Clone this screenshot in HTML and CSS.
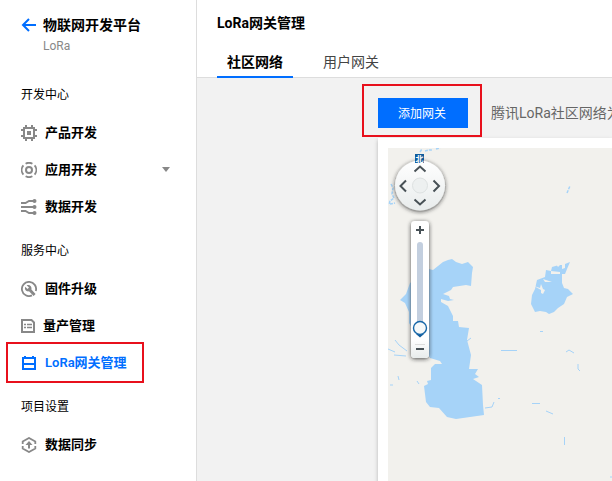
FILE: index.html
```html
<!DOCTYPE html>
<html lang="zh-CN">
<head>
<meta charset="utf-8">
<title>LoRa网关管理</title>
<link rel="stylesheet" href="styles.css">
</head>
<body>
<div class="app">
  <aside class="sidebar">
    <header class="product">
      <svg class="back" width="16" height="16" viewBox="0 0 16 16"><path d="M15 8H2.500M8 2 2 8l6 6" fill="none" stroke="#006eff" stroke-width="2"/></svg>
      <div>
        <h1 class="product-name">物联网开发平台</h1>
        <p class="product-sub">LoRa</p>
      </div>
    </header>
    <nav>
      <section class="group">
        <h2 class="group-title">开发中心</h2>
        <a class="item"><svg class="icon" viewBox="0 0 16 16"><path d="M3 3h10v10H3zM5 0v3M11 0v3M5 13v3M11 13v3M0 5h3M0 11h3M13 5h3M13 11h3"/><path class="solid" d="M6 6h4v4H6z"/></svg><span>产品开发</span></a>
        <a class="item"><svg class="icon" viewBox="0 0 16 16"><circle cx="8" cy="8" r="3"/><path d="M4.600 1.700A7.100 7.100 0 0 1 11.400 1.700M13.600 3.400A7.100 7.100 0 0 1 13.600 12.600M11.400 14.300A7.100 7.100 0 0 1 4.600 14.300M2.400 12.600A7.100 7.100 0 0 1 2.400 3.400" stroke-width="1.800"/></svg><span>应用开发</span><i class="caret"></i></a>
        <a class="item"><svg class="icon" viewBox="0 0 16 16"><path d="M0 4h4.500l3.500-2H13M0 8h13M0 12h4.500l3.500 2H13"/><circle class="solid" cx="13.500" cy="2" r="2"/><circle class="solid" cx="13.500" cy="8" r="2"/><circle class="solid" cx="13.500" cy="14" r="2"/></svg><span>数据开发</span></a>
      </section>
      <section class="group">
        <h2 class="group-title">服务中心</h2>
        <a class="item"><svg class="icon" viewBox="0 0 16 16"><path d="M11 14.400A7.100 7.100 0 1 1 14.800 10" stroke-width="1.800"/><path class="solid" d="M5.600 4.200 8 6.400 6.500 8 4.200 5.700C3.200 8.400 5.200 10.900 8 10.300L12.600 15l2-2L10.400 8.500C11.200 5.500 8.500 3.200 5.600 4.200z"/></svg><span>固件升级</span></a>
        <a class="item item-tight"><svg class="icon" viewBox="0 0 16 16"><path d="M1 2h9.500l2.500 2.500V14H1z"/><path d="M3 6.500h2M6 6.500h5M3 9.500h2M6 9.500h5" stroke-width="1.500"/></svg><span>量产管理</span></a>
        <a class="item item-active"><svg class="icon" viewBox="0 0 16 16"><path d="M2 15V3h12v12M1 14h14M1 9h14M4 1v3M12 1v3"/></svg><span>LoRa网关管理</span></a>
      </section>
      <section class="group">
        <h2 class="group-title">项目设置</h2>
        <a class="item"><svg class="icon" viewBox="0 0 16 16"><path d="M1.700 7V4.500L8 1l6.300 3.500V7M14.300 9v2.500L8 15l-6.300-3.500V9" stroke-width="1.800"/><path d="M8 11.500V6"/><path class="solid" d="M8 4 11.500 8h-7z"/></svg><span>数据同步</span></a>
      </section>
    </nav>
  </aside>
  <main class="main">
    <header class="topbar">
      <h2 class="page-title">LoRa网关管理</h2>
      <div class="tabs"><a class="tab tab-active">社区网络</a><a class="tab">用户网关</a></div>
    </header>
    <div class="content">
      <div class="toolbar"><button class="add">添加网关</button><span class="hint">腾讯LoRa社区网络为</span></div>
      <div class="card">
        <div class="map">
          <svg class="terrain" width="224" height="333" viewBox="388 148 224 333">
            <g class="water">
              <path d="M400 300L406 294 410 283 429 269 433 270 443 262 448 260 452 259 456 262 462 264 468 262 473 267 472 273 471 286 466 285 453 287 451 290 443 294 449 296 450 299 454 300 448 301 441 299 441 302 448 306 453 316 453 321 458 321 459 327 469 328 467 340 471 355 469 369 478 369 475 374 479 377 473 379 482 385 483 405 484 415 456 419 447 417 439 408 430 407 426 402 424 386 428 384 427 381 431 380 431 368 435 364 442 364 440 361 430 358 409 323 409 312 405 303z"/>
              <path d="M531 304l1-9 3-6 2-9 8-3 1-7 5 1v3l9 0 0-2-9-1 1-4 7-2 3 0v4l3-1v-4l5-2-3 7-2 5-3 0 0 9 2 5 4 1 5 5-6 3-3 7-6 4-4 4-5 2-3-2-6-1-5 1z"/>
            </g>
            <path class="land" d="M543 279l9 3-7 0zM534 286l6 2 1-4 2 5 2 1-2 4-2-1 0-3zM556 264l4 1-2 2z"/>
            <path class="river" d="M420 152l2-3M425 151l4-1h3M436 149l4-1M391 184l2 4-1 6 2 4-4 3-1 4M390 204l5-1M567 193l3-7" stroke-dasharray="3 1"/>
            <path class="river thin" d="M395 340l4 5 8 6M388 349l7 3M394 355l12 1M390 385l3 0M398 376l1 4M417 381l2 3M501 350.500h16M578 364v5l2 2M566 352l3-2 5 3M532 403.500h8M546 411l7 3M564.500 437v8M485 408l7-1 2-5M498 398.500h2M540 331.500h3M610 477h2M467 341l4-3"/>
          </svg>
          <svg class="controls" width="66" height="222" viewBox="388 148 66 222">
            <defs>
              <linearGradient id="face" x1="0" y1="0" x2="0" y2="1"><stop offset="0" stop-color="#fff"/><stop offset="1" stop-color="#e8ecec"/></linearGradient>
              <filter id="shade" x="-40%" y="-30%" width="180%" height="160%"><feDropShadow dx="0" dy="1" stdDeviation="2.300" flood-color="#222" flood-opacity=".8"/></filter>
            </defs>
            <circle cx="420" cy="185.500" r="25" fill="url(#face)" filter="url(#shade)"/>
            <circle cx="420" cy="185.500" r="7.500" fill="#edf0f0" stroke="#dde1e1"/>
            <path d="M414.500 171.500l5.500-5 5.500 5M414.500 199.500l5.500 5 5.500-5M406 180.500l-5.500 5.500 5.500 5.500M433.500 180.500l5.500 5.500-5.500 5.500" fill="none" stroke="#485156" stroke-width="2"/>
            <rect x="415" y="154" width="9" height="9" fill="#105c9c"/>
            <text x="419.500" y="161.500" class="north">北</text>
            <rect x="411" y="221" width="18" height="137" rx="4" fill="#fff" filter="url(#shade)"/>
            <path d="M411 339h18v15a4 4 0 0 1-4 4h-10a4 4 0 0 1-4-4z" fill="url(#face)"/>
            <path d="M416 230h8M420 226v8M416 349h8" stroke="#485156" stroke-width="2"/>
            <path d="M415 344.500h10" stroke="#ddd"/>
            <rect x="417" y="242" width="6" height="90" rx="3" fill="#c3cfdf"/>
            <path d="M416 334h8l-4 3.500z" fill="#105c9c"/>
            <circle cx="420" cy="328" r="6.500" fill="#f6f9f9" stroke="#1767a8" stroke-width="1.400"/>
          </svg>
        </div>
      </div>
    </div>
  </main>
</div>
<div class="mark mark-nav"></div>
<div class="mark mark-add"></div>
</body>
</html>
```
FILE: styles.css
```css
* { box-sizing: border-box; }
body {
  margin: 0;
  overflow: hidden;
  color: #000;
  font-family: Roboto, "Noto Sans CJK SC", sans-serif;
}
h1, h2, p { margin: 0; }
.app { display: flex; width: 612px; height: 481px; overflow: hidden; }
.sidebar { flex: none; width: 197px; background: #fff; border-right: 1px solid #ddd; }
.product { display: flex; gap: 6px; height: 76px; padding: 15px 0 0 21px; }
.back { margin-top: 2px; }
.product-name { font-size: 14px; line-height: 20px; font-weight: 700; }
.product-sub { color: #888; font-size: 12px; line-height: 20px; margin-top: 1px; }
.group { margin-bottom: 7px; }
.group-title { padding-left: 21px; font-size: 12px; line-height: 38px; font-weight: 400; }
.item {
  display: flex;
  align-items: center;
  gap: 8px;
  height: 37px;
  padding: 0 26px 0 21px;
  font-size: 13px;
  font-weight: 700;
}
.item span { padding-bottom: 2px; }
.item-tight { gap: 6px; }
.item-active { color: #006eff; }
.item-active span { font-weight: 600; }
.icon { flex: none; width: 16px; height: 16px; fill: none; stroke: #888; stroke-width: 2; }
.icon .solid { fill: #888; stroke: none; }
.item-active .icon { stroke: #006eff; }
.caret { margin-left: auto; border: 4px solid transparent; border-top: 5px solid #888; border-bottom: 0; }
.main { flex: 1; min-width: 0; background: #f2f2f2; }
.topbar { height: 78px; padding: 13px 0 0 20px; background: #fff; border-bottom: 1px solid #ddd; }
.page-title { font-size: 14px; line-height: 20px; font-weight: 700; }
.tabs { display: flex; gap: 20px; margin-top: 13px; }
.tab { height: 32px; padding: 0 10px; font-size: 14px; line-height: 32px; color: #444; }
.tab-active { color: #000; font-weight: 700; border-bottom: 2px solid #006eff; }
.content { padding: 20px 0 0 181px; }
.toolbar { display: flex; align-items: center; gap: 23px; height: 30px; white-space: nowrap; }
.add {
  flex: none;
  width: 90px;
  height: 30px;
  padding: 0 2px 1px 0;
  border: 0;
  background: #006eff;
  color: #fff;
  font: 12px Roboto, "Noto Sans CJK SC", sans-serif;
}
.hint { padding-bottom: 3px; color: #666; font-size: 14px; }
.card { height: 360px; margin-top: 10px; padding: 10px 0 0 10px; background: #fff; box-shadow: 0 2px 4px rgba(0, 0, 0, .25); }
.map { position: relative; height: 350px; overflow: hidden; background: #f2f1ed; }
.terrain { display: block; }
.water { fill: #a6d3f8; }
.land { fill: #f2f1ed; }
.river { fill: none; stroke: #a6d3f8; stroke-width: 1.5; }
.thin { stroke-width: 1; }
.controls { position: absolute; left: 0; top: 0; }
.north { fill: #fff; font: 700 8px "Noto Sans CJK SC", sans-serif; text-anchor: middle; }
.mark { position: absolute; border: 2px solid #e8101c; }
.mark-nav { left: 6px; top: 342px; width: 138px; height: 41px; }
.mark-add { left: 362px; top: 84px; width: 120px; height: 53px; }
```
